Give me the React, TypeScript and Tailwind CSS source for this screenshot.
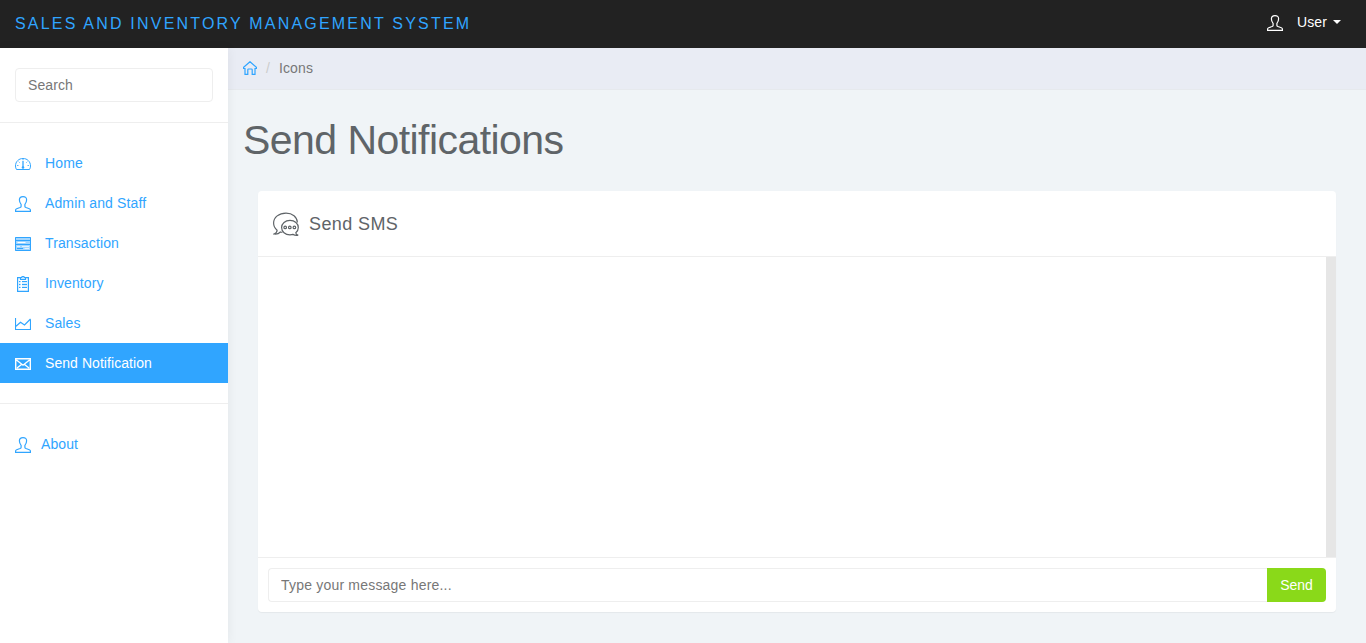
import type { ReactNode } from "react";

type IconProps = { className?: string; children?: ReactNode };

function Icon({ className = "", children }: IconProps) {
  return (
    <svg viewBox="0 0 16 16" fill="none" stroke="currentColor" strokeWidth="1" className={`size-4 shrink-0 ${className}`}>
      {children}
    </svg>
  );
}

const UserIcon = ({ className = "" }: { className?: string }) => (
  <Icon className={className}>
    <path strokeWidth="1.200" d="M8 .6C5.700.6 4.400 1.700 4.400 3.800c0 2 .6 3.400 1.700 4.600v2c0 .5-.4.8-1.100 1.100L1.700 12.700c-.8.3-1.100.7-1.100 1.300v1.400h14.800V14c0-.6-.3-1-1.100-1.300L11 11.500c-.7-.3-1.100-.6-1.100-1.100v-2c1.100-1.200 1.700-2.600 1.700-4.600C11.600 1.700 10.300.6 8 .6Z" />
  </Icon>
);

const DashboardIcon = () => (
  <Icon>
    <path d="M1.500 13.500h13c.7-1 1-2.200 1-3.500C15.500 5.500 12.200 2.500 8 2.500S.5 5.500.5 10c0 1.300.3 2.500 1 3.500Z" />
    <path d="M8 5v6" strokeWidth="1.300" />
    <path d="M8 3v1.300M2 9.500h1.500M12.500 9.500H14M3.700 5.700l1 1M12.300 5.700l-1 1" opacity=".8" />
    <circle cx="8" cy="11.500" r="1.300" fill="currentColor" stroke="none" />
  </Icon>
);

const TableIcon = () => (
  <Icon>
    <path d="M0 1h16v14H0Z" fill="currentColor" stroke="none" opacity=".45" />
    <path d="M.5 1.500h15v13H.5ZM.5 4.500h15M.5 8.500h15" />
    <path d="M2.500 6.500h8" stroke="white" />
    <path d="M2 12.500h6" />
    <path d="M2 10.500h3M7 10.500h7M9.500 12.500h4.500" stroke="white" opacity=".7" />
  </Icon>
);

const ClipboardIcon = () => (
  <Icon>
    <path strokeWidth="1.200" d="M5 1.600H2.600v13.800h10.800V1.600H11M5.500 1.500h1c.3-1.300 2.700-1.300 3 0h1v1.800h-5Z" />
    <path d="M4 5.500h1.500M7 5.500h5M4 8.500h1.500M7 8.500h5M4 11.500h1.500M7 11.500h5" />
    <path d="M4 7h1.500M7 7h5M4 10h1.500M7 10h5" opacity=".35" />
  </Icon>
);

const ChartIcon = () => (
  <Icon>
    <path strokeWidth="1.150" d="M.5 2v11.500h15V3.500M1 10.200 5.500 6.200l4 2.800 6-6" />
  </Icon>
);

const MailIcon = () => (
  <Icon>
    <path d="M.7 2.700h14.600v10.600H.7ZM1.500 4 8 9.200 14.500 4M2 12l4.500-3.500M14 12 9.500 8.500" strokeWidth="1.400" />
  </Icon>
);

const HomeIcon = () => (
  <svg viewBox="0 0 14 14" fill="none" stroke="currentColor" strokeWidth="1.200" className="size-[14px]">
    <path d="M.6 7.500V6.300L7 .7l6.400 5.600v1.200H12v5.900H9.200V8.800a.8.8 0 0 0-.8-.8H5.600a.8.8 0 0 0-.8.8v4.600H2V7.500Z" />
  </svg>
);

const ChatIcon = () => (
  <svg viewBox="0 0 27 25" fill="none" stroke="currentColor" strokeWidth="1.200" className="h-[25px] w-[27px]">
    <path d="M24.400 11.500C24.100 5.900 19.500 2.100 13 2.100 6 2.100.6 6.200.6 12.100c0 3 1.300 5.400 3.500 7.100-.1 1.700-1.100 3-3 3.800 2.700.4 4.800-.4 6.300-2 .8.200 1.300.3 2 .3" />
    <path d="M22.800 21.800c1.600-1.200 2.500-3 2.500-5.200 0-4.200-3.500-7.200-8.300-7.200s-8.400 3-8.400 7.200 3.600 7.200 8.400 7.200c1.100 0 2-.1 2.900-.4 1.700.9 3.300 1.200 5.300.8-1.400-.3-2.300-1.100-2.400-2.400Z" />
    <circle cx="12.200" cy="16.400" r="1.300" />
    <circle cx="16.800" cy="16.400" r="1.300" />
    <circle cx="21.400" cy="16.400" r="1.300" />
  </svg>
);

const menu = [
  { label: "Home", icon: <DashboardIcon /> },
  { label: "Admin and Staff", icon: <UserIcon /> },
  { label: "Transaction", icon: <TableIcon /> },
  { label: "Inventory", icon: <ClipboardIcon /> },
  { label: "Sales", icon: <ChartIcon /> },
  { label: "Send Notification", icon: <MailIcon />, active: true },
];

function Sidebar() {
  return (
    <aside className="z-10 w-[228px] shrink-0 bg-white text-[#30a5ff] shadow-[1px_0_10px_rgba(0,0,0,0.05)]">
      <div className="border-b border-[#eee] px-[15px] py-5">
        <input
          placeholder="Search"
          className="block h-[34px] w-full rounded-[4px] border border-[#eee] px-3 tracking-[0.1px] placeholder:text-[#777] focus:outline-none"
        />
      </div>
      <nav className="border-b border-[#eee] py-5">
        {menu.map((item) => (
          <a
            key={item.label}
            className={`flex h-10 items-center gap-[14px] px-[15px] ${item.active ? "bg-[#30a5ff] tracking-[0.06px] text-white" : "tracking-[0.12px]"}`}
          >
            <span className="pt-[2px]">{item.icon}</span>
            <span>{item.label}</span>
          </a>
        ))}
      </nav>
      <a className="mt-5 flex h-10 items-center gap-[10px] px-[15px] tracking-[0.1px]">
        <span className="pt-[2px]"><UserIcon /></span>
        <span>About</span>
      </a>
    </aside>
  );
}

export default function App() {
  return (
    <div className="flex h-screen flex-col overflow-hidden bg-[#f0f4f7] font-['Liberation_Sans',Arial,sans-serif] text-[14px] leading-5 text-[#5f6468]">
      <header className="flex h-12 shrink-0 items-center justify-between bg-[#222] pr-[25px] pl-[15px]">
        <span className="text-[16px] tracking-[2.2px] text-[#30a5ff]">SALES AND INVENTORY MANAGEMENT SYSTEM</span>
        <div className="flex items-center pb-[4px] text-white">
          <UserIcon className="mt-[1px] mr-[14px]" />
          <span className="tracking-[0.1px]">User</span>
          <span className="ml-[6px] border-x-4 border-t-4 border-x-transparent border-t-white" />
        </div>
      </header>
      <div className="flex min-h-0 flex-1">
        <Sidebar />
        <main className="min-w-0 flex-1">
          <div className="flex h-[42px] items-center border-b border-[#e6e9ed] bg-[#e9ecf4] pb-px pl-[15px] text-[#777]">
            <span className="text-[#30a5ff]"><HomeIcon /></span>
            <span className="mx-[9px] text-[#ccc]">/</span>
            <span className="tracking-[0.15px]">Icons</span>
          </div>
          <h1 className="mt-[28px] pl-[15px] text-[41px] leading-[44px] tracking-[-0.55px]">Send Notifications</h1>
          <section className="mt-[29px] mr-[30px] ml-[30px] overflow-hidden rounded-[4px] bg-white shadow-[0_1px_1px_rgba(0,0,0,0.05)]">
            <div className="flex h-[66px] items-center gap-[9px] border-b border-[#eee] pl-[15px]">
              <ChatIcon />
              <h2 className="text-[18px] tracking-[0.4px]">Send SMS</h2>
            </div>
            <div className="h-[300px] border-r-[10px] border-[#e6e6e6]" />
            <div className="flex border-t border-[#eee] p-[10px]">
              <input
                placeholder="Type your message here..."
                className="h-[34px] min-w-0 flex-1 rounded-l-[4px] border border-r-0 border-[#eee] px-3 tracking-[0.2px] placeholder:text-[#777] focus:outline-none"
              />
              <button className="h-[34px] w-[59px] rounded-r-[4px] bg-[#8ad919] text-white">Send</button>
            </div>
          </section>
        </main>
      </div>
    </div>
  );
}
